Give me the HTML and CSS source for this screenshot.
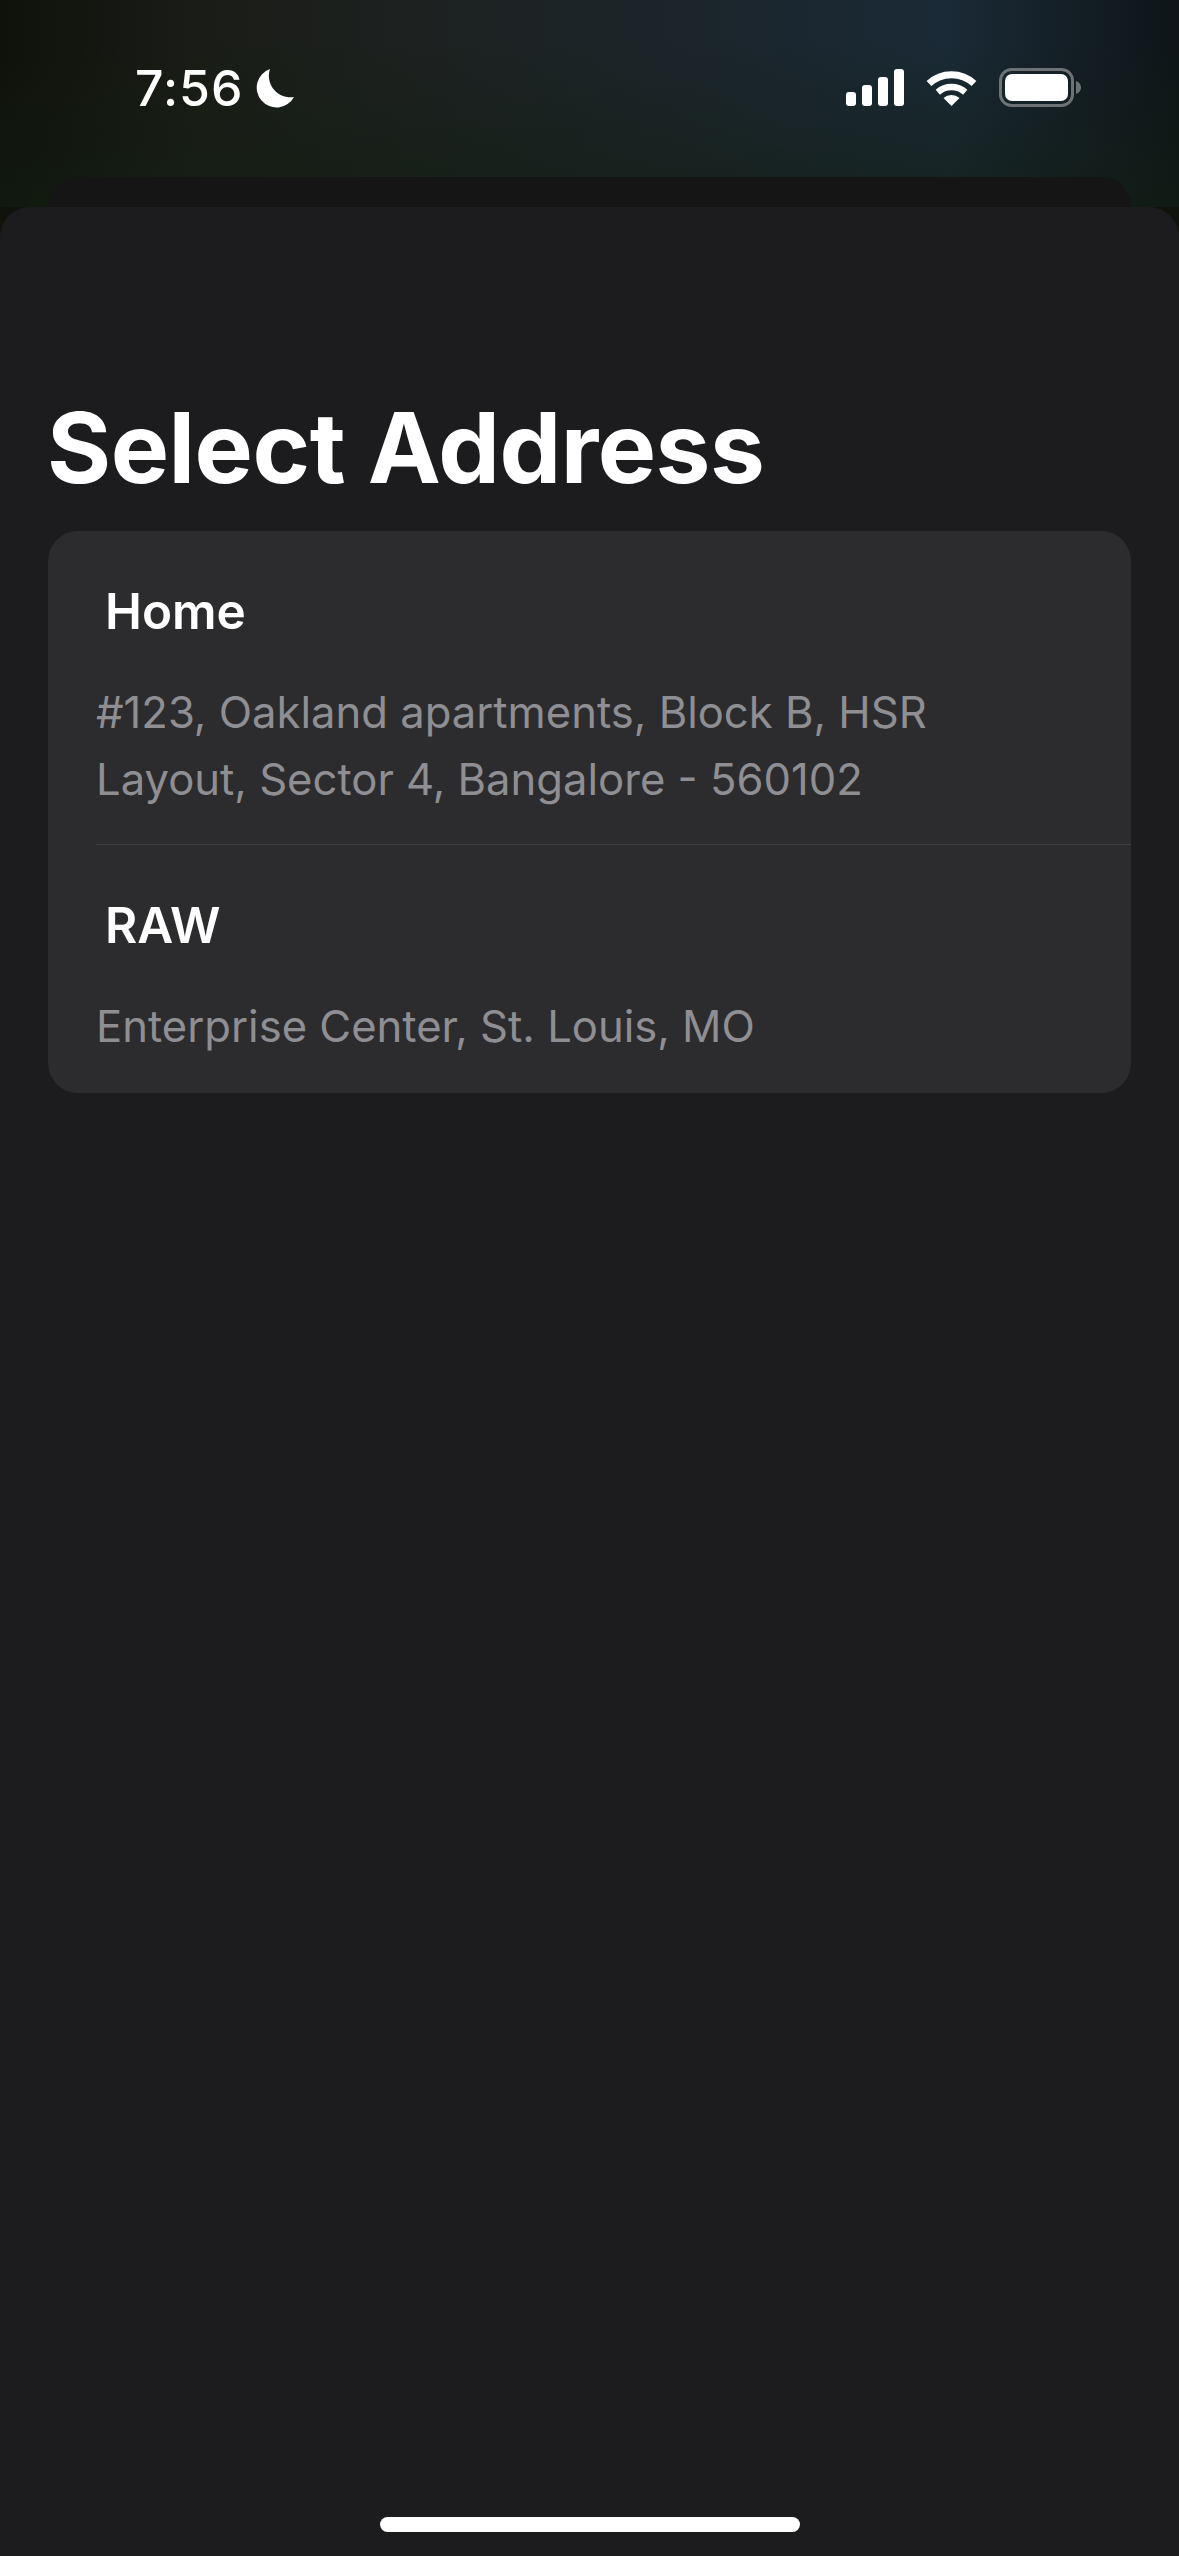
FILE: index.html
```html
<!DOCTYPE html>
<html lang="en">
<head>
    <meta charset="UTF-8">
    <title>Select Address</title>
    <link rel="stylesheet" href="styles.css">
</head>
<body>
<div class="screen">
    <div class="statusBar">
        <div class="clock">
            <span class="time">7:56</span>
            <svg class="moon" width="39" height="39" viewBox="0 0 39 39">
                <path d="M15 0A19.8 19.8 0 1 0 39 28A21.5 21.5 0 0 1 15 0Z" fill="#fff"/>
            </svg>
        </div>
        <div class="statusIcons">
            <svg width="58" height="37" viewBox="0 0 58 37">
                <rect x="0" y="23" width="10" height="14" rx="3" fill="#fff"/>
                <rect x="16" y="16" width="10" height="21" rx="3" fill="#fff"/>
                <rect x="32" y="8" width="10" height="29" rx="3" fill="#fff"/>
                <rect x="48" y="0" width="10" height="37" rx="3" fill="#fff"/>
            </svg>
            <svg width="51" height="37" viewBox="0 0 51 37">
                <path d="M3 14.5A33 33 0 0 1 48 14.5" fill="none" stroke="#fff" stroke-width="7"/>
                <path d="M11.8 23.2A21 21 0 0 1 39.2 23.2" fill="none" stroke="#fff" stroke-width="6.5"/>
                <path d="M17.5 29A12 12 0 0 1 33.5 29L25.5 37Z" fill="#fff"/>
            </svg>
            <svg width="82" height="39" viewBox="0 0 82 39">
                <rect x="1.5" y="1.5" width="72" height="36" rx="11" fill="none" stroke="#6d7375" stroke-width="3"/>
                <rect x="6" y="6" width="63" height="27" rx="7" fill="#fff"/>
                <path d="M77 13C80 14 82 16.5 82 19.500C82 22.500 80 25 77 26Z" fill="#6d7375"/>
            </svg>
        </div>
    </div>
    <div class="backSheet"></div>
    <div class="sheet">
        <h1 class="title">Select Address</h1>
        <ul class="addressList">
            <li class="addressItem">
                <div class="addressName">Home</div>
                <div class="addressText">#123, Oakland apartments, Block B, HSR<br>Layout, Sector 4, Bangalore - 560102</div>
            </li>
            <li class="addressItem">
                <div class="addressName">RAW</div>
                <div class="addressText">Enterprise Center, St. Louis, MO</div>
            </li>
        </ul>
        <div class="homeBar"></div>
    </div>
</div>
</body>
</html>
```

FILE: styles.css
```css
*{
    margin:0;
    padding:0;
    box-sizing:border-box;
}
body{
    background-color:#1c1c1e;
    font-family:"Inter","Liberation Sans",sans-serif;
}
.screen{
    display:flex;
    flex-direction:column;
    width:1179px;
    height:2556px;
    overflow:hidden;
    background-color:#10120c;
    background-image:
        linear-gradient(180deg,rgba(18,28,16,0) 40px,rgba(18,30,18,.6) 207px),
        linear-gradient(90deg,#0f110b 0,#1a1d17 200px,#1d2120 420px,#1c2428 620px,#1b2730 790px,#1a2a36 950px,#111a20 1120px,#0f1518 1179px);
    background-size:100% 207px;
    background-repeat:no-repeat;
}
.statusBar{
    display:flex;
    justify-content:space-between;
    align-items:flex-start;
    height:177px;
    padding:68px 98px 0 135px;
}
.clock{
    display:flex;
    align-items:center;
    gap:12px;
}
.time{
    font-size:50px;
    font-weight:500;
    letter-spacing:1px;
    line-height:40px;
    color:#fff;
}
.moon{
    display:block;
}
.statusIcons{
    display:flex;
    align-items:center;
    gap:22px;
}
.statusIcons svg{
    display:block;
}
.backSheet{
    flex:none;
    height:30px;
    margin:0 48px;
    border-radius:30px 30px 0 0;
    background-color:#151515;
}
.sheet{
    flex:1;
    display:flex;
    flex-direction:column;
    padding:183px 0 24px 48px;
    border-radius:30px 30px 0 0;
    background-color:#1c1c1e;
}
.title{
    margin-left:-1px;
    font-size:98px;
    font-weight:700;
    letter-spacing:-.5px;
    line-height:116px;
    color:#fff;
}
.addressList{
    list-style-type:none;
    margin-top:25px;
    margin-right:48px;
    border-radius:30px;
    background-color:#2c2c2e;
}
.addressItem{
    margin-left:48px;
    padding:51px 0 31px;
}
.addressItem:first-child{
    border-bottom:1px solid #3f3f41;
}
.addressItem:last-child{
    padding-bottom:33px;
}
.addressName{
    padding-left:9px;
    font-size:49.5px;
    font-weight:600;
    line-height:58px;
    color:#fff;
}
.addressText{
    margin-top:39px;
    font-size:43.6px;
    line-height:67px;
    color:#8e8e93;
}
.homeBar{
    width:420px;
    height:15px;
    margin:auto 0 0 332px;
    border-radius:8px;
    background-color:#fff;
}
```
